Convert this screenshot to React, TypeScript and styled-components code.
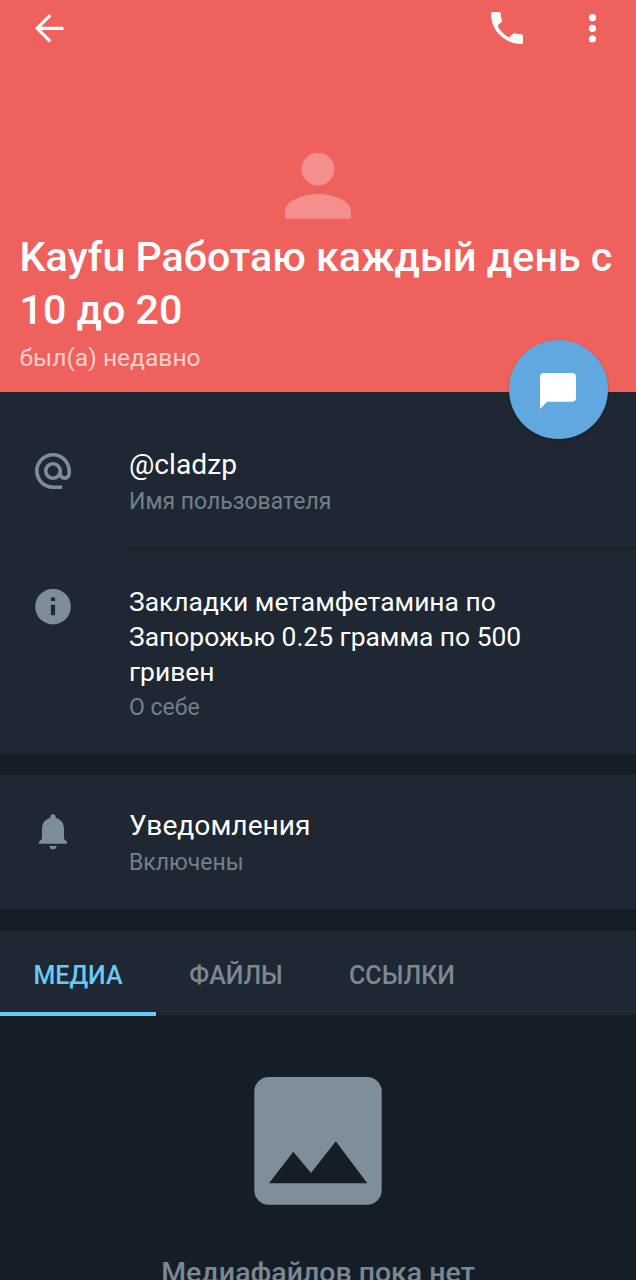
import React from 'react';
import styled, { createGlobalStyle } from 'styled-components';

const GlobalStyle = createGlobalStyle`
  * { box-sizing: border-box; }
  html, body { margin: 0; background: #151e27; }
  body { font-family: Roboto, "Liberation Sans", sans-serif; overflow: hidden; }
  svg { display: block; flex: none; }
`;

const Screen = styled.div`
  display: flex;
  flex-direction: column;
  width: 636px;
  height: 1280px;
  overflow: hidden;
  background: #151e27;
`;

const Hero = styled.header`
  position: relative;
  display: flex;
  flex-direction: column;
  flex: none;
  height: 392px;
  background: #ee615c;
  color: #fff;
`;

const Toolbar = styled.div`
  display: flex;
  align-items: center;
  height: 56px;
  padding: 0 25px 0 31px;
`;

const IconButton = styled.button<{ $push?: boolean; $gap?: number }>`
  display: flex;
  padding: 0;
  border: 0;
  background: none;
  color: inherit;
  margin-left: ${(p) => (p.$push ? 'auto' : `${p.$gap ?? 0}px`)};
`;

const Avatar = styled.div`
  display: flex;
  justify-content: center;
  height: 66px;
  margin-top: 97px;
  color: #f58f8d;
`;

const Name = styled.h1`
  margin: 12px 0 0;
  padding: 0 19.5px;
  font-size: 41.2px;
  line-height: 53px;
  font-weight: 500;
  white-space: nowrap;
`;

const Status = styled.div`
  margin-top: 6px;
  padding: 0 19.5px;
  font-size: 24.6px;
  line-height: 30px;
  color: #fdd0ce;
`;

const MessageButton = styled.button`
  position: absolute;
  right: 28px;
  bottom: -46.5px;
  display: flex;
  align-items: center;
  justify-content: center;
  width: 99px;
  height: 99px;
  padding: 4px 1px 0 0;
  border: 0;
  border-radius: 50%;
  background: #61a8e0;
  color: #fff;
  box-shadow: 0 1px 3px rgba(0, 0, 0, 0.22);
`;

const Section = styled.section<{ $height: number; $gap: number }>`
  flex: none;
  height: ${(p) => p.$height}px;
  margin-bottom: ${(p) => p.$gap}px;
  background: #1e2732;
`;

const Row = styled.div<{ $top: number; $height: number }>`
  display: flex;
  height: ${(p) => p.$height}px;
  padding-top: ${(p) => p.$top}px;
`;

const RowIcon = styled.div<{ $offset: number }>`
  display: flex;
  justify-content: center;
  flex: none;
  width: 106px;
  margin-right: 23px;
  padding-top: ${(p) => p.$offset}px;
  color: #7d8e98;
`;

const RowText = styled.div`
  display: flex;
  flex-direction: column;
  white-space: nowrap;
`;

const Title = styled.div`
  font-size: 28.2px;
  line-height: 36px;
  color: #fff;
`;

const Bio = styled.div`
  font-size: 26.4px;
  line-height: 35px;
  color: #fff;
`;

const Caption = styled.div<{ $gap: number }>`
  margin-top: ${(p) => p.$gap}px;
  font-size: 23px;
  line-height: 30px;
  color: #72808b;
`;

const Divider = styled.div`
  height: 1px;
  margin-left: 126px;
  background: #111820;
`;

const Tabs = styled.nav`
  display: flex;
  flex: none;
  height: 84px;
  background: #1e2732;
`;

const Tab = styled.div<{ $active?: boolean; $width: number }>`
  width: ${(p) => p.$width}px;
  height: ${(p) => (p.$active ? 85 : 84)}px;
  text-align: center;
  font-size: 25px;
  line-height: 90px;
  font-weight: 500;
  white-space: nowrap;
  color: ${(p) => (p.$active ? '#67cbfa' : '#7b8893')};
  box-shadow: ${(p) => (p.$active ? 'inset 0 -4px 0 #67cbfa' : 'none')};
`;

const Empty = styled.main`
  display: flex;
  flex-direction: column;
  align-items: center;
  padding-top: 62px;
  color: #7f8f99;
`;

const EmptyTitle = styled.div`
  margin-top: 48px;
  font-size: 28.5px;
  line-height: 40px;
  font-weight: 500;
  white-space: nowrap;
  color: #7b8893;
`;

export default function App() {
  return (
    <Screen>
      <GlobalStyle />
      <Hero>
        <Toolbar>
          <IconButton aria-label="Назад">
            <svg width="36" height="36" viewBox="0 0 36 36" fill="none" stroke="currentColor" strokeWidth="3.2">
              <path d="M19.2 5.200 6.200 18.300 19.200 31.400M6.500 18.300H32.500" />
            </svg>
          </IconButton>
          <IconButton $push aria-label="Позвонить">
            <svg width="32" height="32" viewBox="3 3 18 18" fill="currentColor">
              <path d="M6.62 10.79c1.44 2.83 3.76 5.14 6.59 6.59l2.2-2.2c.27-.27.67-.36 1.02-.24 1.12.37 2.33.57 3.57.57.55 0 1 .45 1 1V20c0 .55-.45 1-1 1-9.39 0-17-7.61-17-17 0-.55.45-1 1-1h3.5c.55 0 1 .45 1 1 0 1.25.2 2.45.57 3.57.11.35.03.74-.25 1.02l-2.2 2.2z" />
            </svg>
          </IconButton>
          <IconButton $gap={52} aria-label="Меню">
            <svg width="36" height="36" viewBox="0 0 36 36" fill="currentColor">
              <circle cx="17.500" cy="7.600" r="3.600" />
              <circle cx="17.500" cy="18.300" r="3.600" />
              <circle cx="17.500" cy="29" r="3.600" />
            </svg>
          </IconButton>
        </Toolbar>
        <Avatar>
          <svg width="66" height="66" viewBox="0 0 66 66" fill="currentColor">
            <circle cx="33" cy="16.200" r="16.400" />
            <path d="M0 65.800V58C0 47 20 41 33 41s33 6 33 17v7.800z" />
          </svg>
        </Avatar>
        <Name>
          Kayfu Работаю каждый день с<br />10 до 20
        </Name>
        <Status>был(а) недавно</Status>
        <MessageButton aria-label="Написать">
          <svg width="36" height="36" viewBox="2 2 20 20" fill="currentColor">
            <path d="M20 2H4c-1.1 0-1.99.9-1.99 2L2 22l4-4h14c1.1 0 2-.9 2-2V4c0-1.1-.9-2-2-2z" />
          </svg>
        </MessageButton>
      </Hero>

      <Section $height={362} $gap={21}>
        <Row $top={55} $height={156}>
          <RowIcon $offset={5.5}>
            <svg width="36" height="36" viewBox="2 2 20 20" fill="currentColor">
              <path d="M12 2C6.48 2 2 6.48 2 12s4.48 10 10 10h5v-2h-5c-4.34 0-8-3.66-8-8s3.66-8 8-8 8 3.66 8 8v1.43c0 .79-.71 1.57-1.5 1.57s-1.5-.78-1.5-1.57V12c0-2.76-2.24-5-5-5s-5 2.24-5 5 2.24 5 5 5c1.38 0 2.64-.56 3.54-1.47.65.89 1.77 1.47 2.96 1.47 1.97 0 3.5-1.6 3.5-3.57V12c0-5.52-4.48-10-10-10zm0 13c-1.66 0-3-1.34-3-3s1.34-3 3-3 3 1.34 3 3-1.34 3-3 3z" />
            </svg>
          </RowIcon>
          <RowText>
            <Title>@cladzp</Title>
            <Caption $gap={4}>Имя пользователя</Caption>
          </RowText>
        </Row>
        <Divider />
        <Row $top={36} $height={205}>
          <RowIcon $offset={4}>
            <svg width="36" height="36" viewBox="0 0 36 36">
              <circle cx="18" cy="17.600" r="17.800" fill="currentColor" />
              <path d="M15.900 8.400h4.200v3.700h-4.200zM15.900 15.800h4.200v10.400h-4.200z" fill="#1e2732" />
            </svg>
          </RowIcon>
          <RowText>
            <Bio>
              Закладки метамфетамина по<br />Запорожью 0.25 грамма по 500<br />гривен
            </Bio>
            <Caption $gap={3}>О себе</Caption>
          </RowText>
        </Row>
      </Section>

      <Section $height={134} $gap={22}>
        <Row $top={33} $height={134}>
          <RowIcon $offset={6}>
            <svg width="28" height="36" viewBox="0 0 28 36" fill="currentColor">
              <path d="M14 .3c1.7 0 2.8 1.2 2.8 2.8v.9C21.900 5.200 25 9.400 25 14.600V24.800l3 3.200v1.700H0V28l3-3.200V14.600C3 9.400 6.100 5.200 11.200 4v-.9C11.200 1.500 12.300.3 14 .3zM10.300 31.900h7.400c0 2-1.700 3.400-3.700 3.400s-3.700-1.400-3.700-3.400z" />
            </svg>
          </RowIcon>
          <RowText>
            <Title>Уведомления</Title>
            <Caption $gap={4}>Включены</Caption>
          </RowText>
        </Row>
      </Section>

      <Tabs>
        <Tab $active $width={156}>МЕДИА</Tab>
        <Tab $width={160}>ФАЙЛЫ</Tab>
        <Tab $width={172}>ССЫЛКИ</Tab>
      </Tabs>

      <Empty>
        <svg width="128" height="128" viewBox="0 0 128 128">
          <rect x="0.300" y="0" width="127.400" height="127.800" rx="14.500" fill="currentColor" />
          <path d="M15 106.300 39.300 74.800 57 96 81.800 64.300 113.300 106.300z" fill="#151e27" />
        </svg>
        <EmptyTitle>Медиафайлов пока нет</EmptyTitle>
      </Empty>
    </Screen>
  );
}
